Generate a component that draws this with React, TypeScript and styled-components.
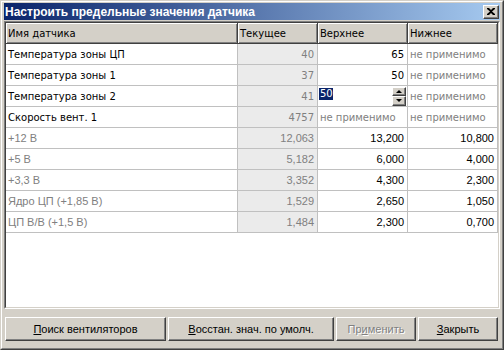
import styled, { createGlobalStyle } from "styled-components";

const GlobalStyle = createGlobalStyle`
  html, body {
    margin: 0;
    padding: 0;
    background: #d4d0c8;
  }
  body {
    font-family: "DejaVu Sans", Verdana, sans-serif;
    font-size: 10px;
  }
`;

type Row = {
  name: string;
  cur: string;
  hi: string;
  lo: string;
  dim?: boolean;
  editing?: boolean;
};

const NA = "не применимо";

const rows: Row[] = [
  { name: "Температура зоны ЦП", cur: "40", hi: "65", lo: NA },
  { name: "Температура зоны 1", cur: "37", hi: "50", lo: NA },
  { name: "Температура зоны 2", cur: "41", hi: "50", lo: NA, editing: true },
  { name: "Скорость вент. 1", cur: "4757", hi: NA, lo: NA },
  { name: "+12 В", cur: "12,063", hi: "13,200", lo: "10,800", dim: true },
  { name: "+5 В", cur: "5,182", hi: "6,000", lo: "4,000", dim: true },
  { name: "+3,3 В", cur: "3,352", hi: "4,300", lo: "2,300", dim: true },
  { name: "Ядро ЦП (+1,85 В)", cur: "1,529", hi: "2,650", lo: "1,050", dim: true },
  { name: "ЦП В/В (+1,5 В)", cur: "1,484", hi: "2,300", lo: "0,700", dim: true },
];

export default function App() {
  return (
    <>
      <GlobalStyle />
      <Window>
        <Frame>
          <TitleBar>
            <Title>Настроить предельные значения датчика</Title>
            <CloseButton>
              <svg width="8" height="7" viewBox="0 0 8 7">
                <path d="M0 0h2l2 2 2-2h2v1L5 3.5 8 6v1H6L4 5 2 7H0V6l3-2.5L0 1z" fill="#000" />
              </svg>
            </CloseButton>
          </TitleBar>
          <GridFrame>
            <Grid>
              <HeaderCell>Имя датчика</HeaderCell>
              <HeaderCell>Текущее</HeaderCell>
              <HeaderCell>Верхнее</HeaderCell>
              <HeaderCell>Нижнее</HeaderCell>
              {rows.map((r) => (
                <RowGroup key={r.name} row={r} />
              ))}
            </Grid>
          </GridFrame>
          <ButtonBar>
            <Button $w={161}>
              <u>П</u>оиск вентиляторов
            </Button>
            <Button $w={166}>
              <u>В</u>осстан. знач. по умолч.
            </Button>
            <Button $w={80} $disabled>
              Пр<u>и</u>менить
            </Button>
            <Button $w={80}>
              <u>З</u>акрыть
            </Button>
          </ButtonBar>
        </Frame>
      </Window>
    </>
  );
}

function RowGroup({ row }: { row: Row }) {
  const isNum = (v: string) => v !== NA;
  const classic = !!row.dim;
  return (
    <>
      <Cell $muted={row.dim} $classic={classic}>
        {row.name}
      </Cell>
      <Cell $current $right $muted $classic={classic}>
        {row.cur}
      </Cell>
      {row.editing ? (
        <EditCell>
          <Selected>{row.hi}</Selected>
          <Spinner>
            <SpinButton>
              <Arrow $up />
            </SpinButton>
            <SpinButton>
              <Arrow />
            </SpinButton>
          </Spinner>
        </EditCell>
      ) : (
        <Cell $right={isNum(row.hi)} $muted={!isNum(row.hi)} $classic={classic}>
          {row.hi}
        </Cell>
      )}
      <Cell $right={isNum(row.lo)} $muted={!isNum(row.lo)} $classic={classic}>
        {row.lo}
      </Cell>
    </>
  );
}

const Window = styled.div`
  width: 504px;
  height: 350px;
  box-sizing: border-box;
  border: 1px solid;
  border-color: #d4d0c8 #404040 #404040 #d4d0c8;
  background: #d4d0c8;
`;

const Frame = styled.div`
  height: 100%;
  box-sizing: border-box;
  border: 1px solid;
  border-color: #ffffff #808080 #808080 #ffffff;
  padding: 1px 2px 2px 2px;
  display: flex;
  flex-direction: column;
`;

const TitleBar = styled.div`
  height: 17px;
  flex: none;
  display: flex;
  align-items: center;
  justify-content: space-between;
  padding-left: 1px;
  background: linear-gradient(to right, #0a246a, #a6caf0);
`;

const Title = styled.span`
  color: #ffffff;
  font-family: "Liberation Sans", Arial, sans-serif;
  font-weight: bold;
  font-size: 12px;
  white-space: nowrap;
`;

const CloseButton = styled.div`
  width: 16px;
  height: 14px;
  margin-right: 1px;
  box-sizing: border-box;
  background: #d4d0c8;
  border: 1px solid;
  border-color: #ffffff #404040 #404040 #ffffff;
  box-shadow: inset -1px -1px #808080;
  display: flex;
  align-items: center;
  justify-content: center;
  padding: 0 1px 1px 0;
`;

const GridFrame = styled.div`
  margin-top: 1px;
  height: 288px;
  box-sizing: border-box;
  border: 1px solid;
  border-color: #808080 #ffffff #ffffff #808080;
  flex: none;
`;

const Grid = styled.div`
  height: 100%;
  box-sizing: border-box;
  border: 1px solid;
  border-color: #404040 #d4d0c8 #d4d0c8 #404040;
  background: #ffffff;
  display: grid;
  grid-template-columns: 232px 80px 90px 90px;
  grid-auto-rows: 21px;
  align-content: start;
`;

const HeaderCell = styled.div`
  box-sizing: border-box;
  background: #d4d0c8;
  border-right: 1px solid #404040;
  border-bottom: 1px solid #404040;
  box-shadow: inset 1px 1px #ffffff, inset -1px -1px #808080;
  color: #000000;
  padding-left: 2px;
  display: flex;
  align-items: center;
  white-space: nowrap;
`;

const Cell = styled.div<{
  $right?: boolean;
  $muted?: boolean;
  $current?: boolean;
  $classic?: boolean;
}>`
  box-sizing: border-box;
  border-right: 1px solid #c0c0c0;
  border-bottom: 1px solid #c0c0c0;
  background: ${(p) => (p.$current ? "#ebebeb" : "#ffffff")};
  color: ${(p) => (p.$muted ? "#808080" : "#000000")};
  font-family: ${(p) =>
    p.$classic ? `"Liberation Sans", Arial, sans-serif` : `"DejaVu Sans", Verdana, sans-serif`};
  font-size: ${(p) => (p.$classic ? "11px" : "10px")};
  display: flex;
  align-items: center;
  justify-content: ${(p) => (p.$right ? "flex-end" : "flex-start")};
  padding: 0 3px 0 2px;
  white-space: nowrap;
  overflow: hidden;
`;

const EditCell = styled.div`
  box-sizing: border-box;
  border-right: 1px solid #c0c0c0;
  border-bottom: 1px solid #c0c0c0;
  background: #ffffff;
  display: flex;
  align-items: center;
  justify-content: space-between;
  padding: 0 1px 0 1px;
`;

const Selected = styled.span`
  background: #0a246a;
  color: #ffffff;
  line-height: 12px;
  padding: 0 0 0 1px;
  margin-top: -4px;
`;

const Spinner = styled.div`
  width: 14px;
  height: 19px;
  display: flex;
  flex-direction: column;
`;

const SpinButton = styled.div`
  flex: 1;
  box-sizing: border-box;
  background: #d4d0c8;
  border: 1px solid;
  border-color: #ffffff #404040 #404040 #ffffff;
  box-shadow: inset -1px -1px #808080;
  display: flex;
  align-items: center;
  justify-content: center;
`;

const Arrow = styled.span<{ $up?: boolean }>`
  width: 0;
  height: 0;
  border-left: 3px solid transparent;
  border-right: 3px solid transparent;
  ${(p) => (p.$up ? "border-bottom: 3px solid #000;" : "border-top: 3px solid #000;")}
`;

const ButtonBar = styled.div`
  margin-top: 8px;
  margin-left: 1px;
  display: flex;
  gap: 2px;
`;

const Button = styled.div<{ $w: number; $disabled?: boolean }>`
  width: ${(p) => p.$w}px;
  height: 24px;
  box-sizing: border-box;
  background: #d4d0c8;
  border: 1px solid;
  border-color: #ffffff #404040 #404040 #ffffff;
  box-shadow: inset -1px -1px #808080;
  display: flex;
  align-items: center;
  justify-content: center;
  font-family: "Liberation Sans", Arial, sans-serif;
  font-size: 11px;
  color: ${(p) => (p.$disabled ? "#808080" : "#000000")};
  text-shadow: ${(p) => (p.$disabled ? "1px 1px #ffffff" : "none")};
  white-space: nowrap;
`;
